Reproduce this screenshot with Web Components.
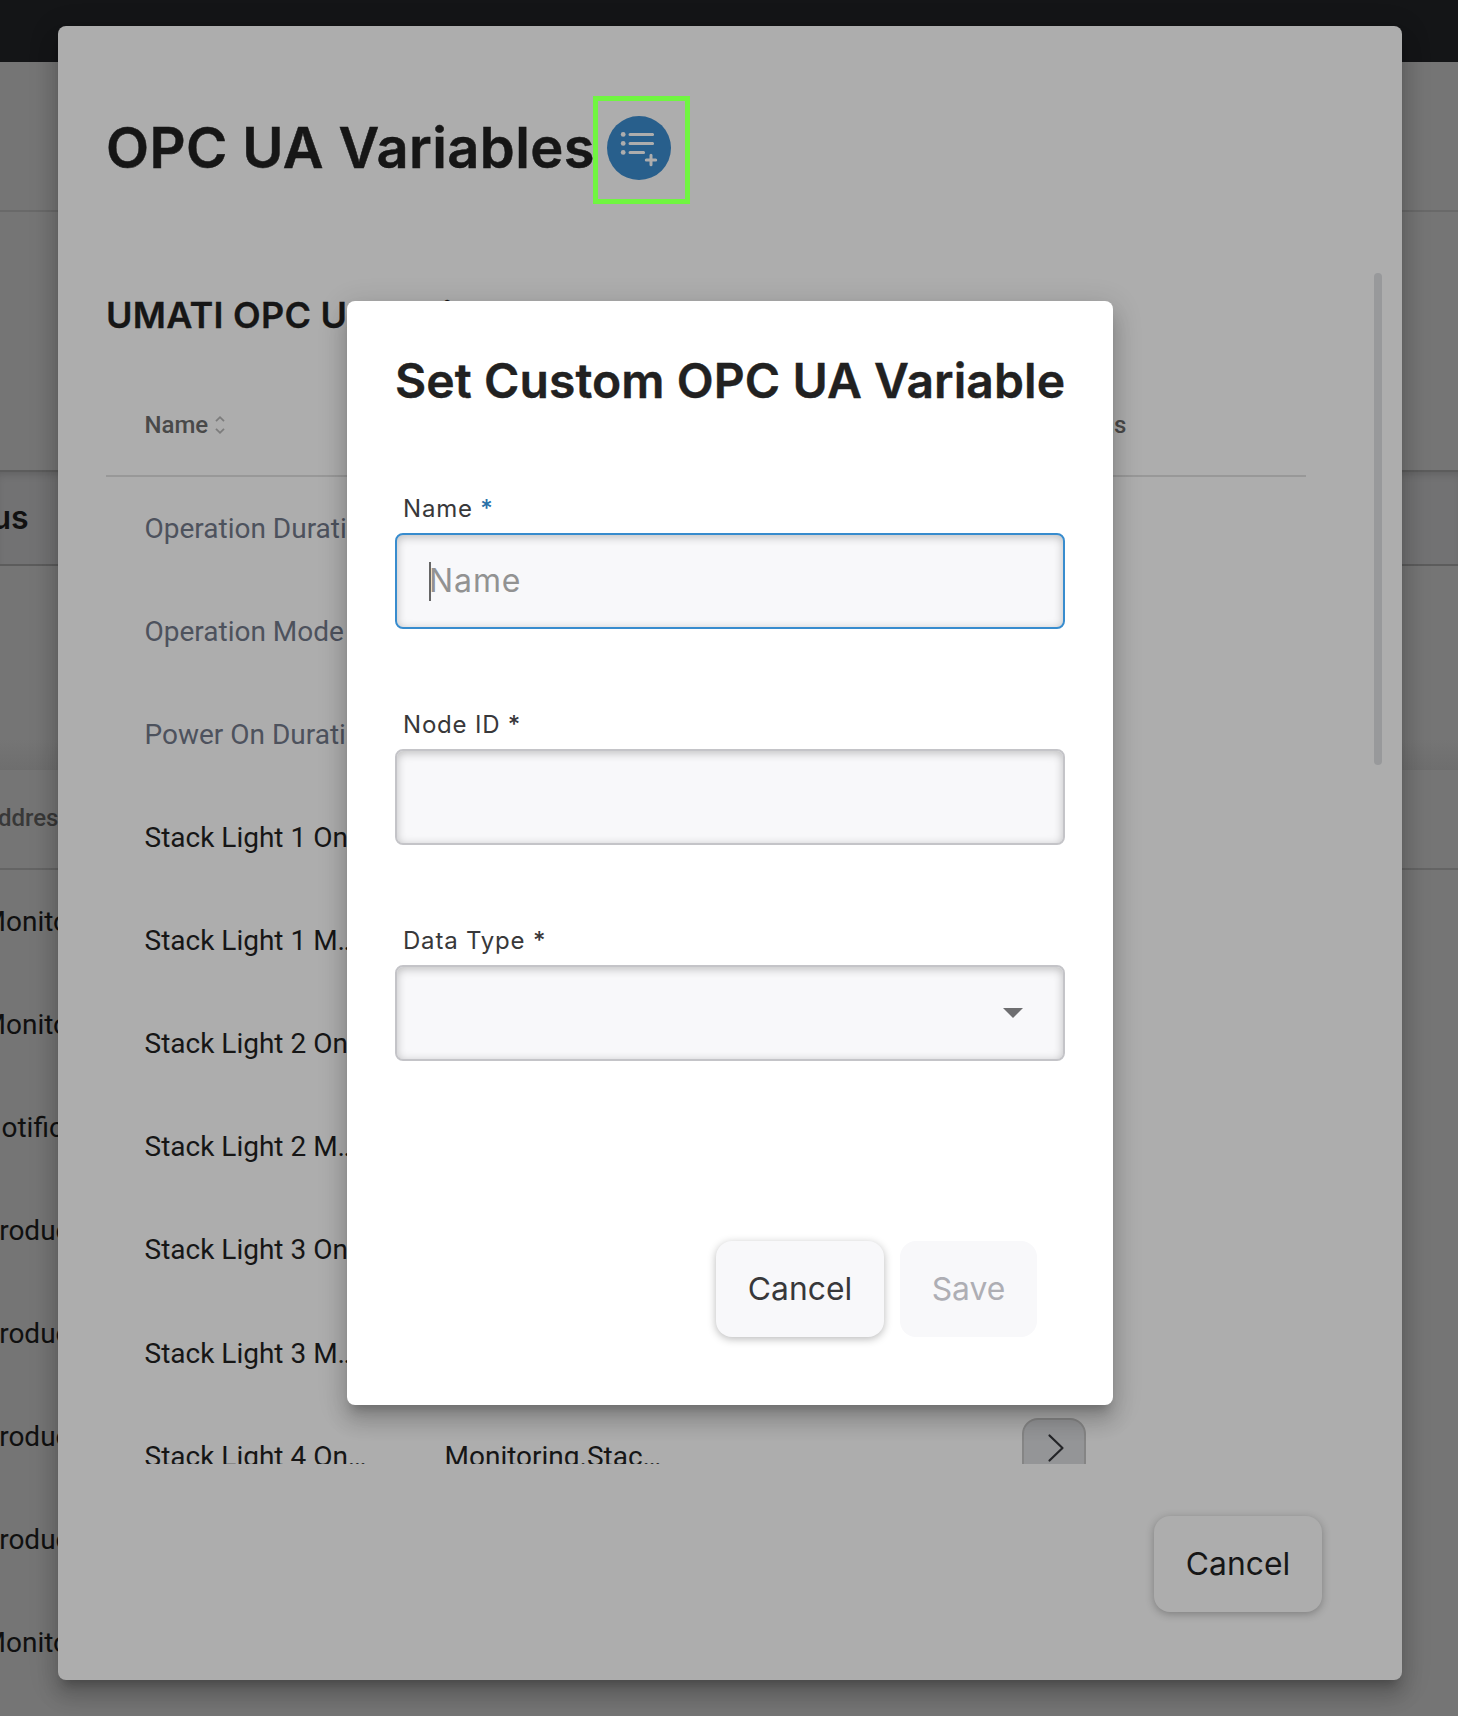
<!DOCTYPE html>
<html lang="en">
<head>
<meta charset="utf-8">
<title>OPC UA Variables</title>
<style>
html,body{margin:0;height:1716px;overflow:hidden;background:#757575;font-family:Inter,"Liberation Sans",sans-serif}
</style>
</head>
<body>
<opc-app></opc-app>
<script>
const define = (name, html) => customElements.define(name, class extends HTMLElement {
  constructor() {
    super();
    const t = document.createElement('template');
    t.innerHTML = html;
    this.attachShadow({mode: 'open'}).append(t.content.cloneNode(true));
  }
});

define('data-cell', `<style>
:host{display:block;box-sizing:border-box;height:var(--row,103px);font:400 28px/103px Roboto,sans-serif;color:#161616;white-space:nowrap;overflow:hidden;text-overflow:ellipsis}
:host([muted]){color:#4d525d}
</style><slot></slot>`);

define('back-page', `<style>
:host{display:flex;flex-direction:column;width:1458px;height:1716px;background:#757575;overflow:hidden}
.bar{height:62px;background:#141517}
.head{height:148px;border-bottom:2px solid #696969}
.sub{height:258px}
.tabs{height:92px;border-top:2px solid #5c5c5c;border-bottom:2px solid #5c5c5c;background:#727273;box-shadow:inset 0 6px 8px -4px rgba(0,0,0,.16);font:600 32px/92px Inter,sans-serif;color:#111}
.tabs span{margin-left:-70.5px}
.gap{height:204px;background:linear-gradient(#757575 85%,#6e6e6e)}
.th{height:98px;border-bottom:2px solid #646464;font:500 24px/96px Roboto,sans-serif;color:#383838}
.th span{margin-left:-18px}
data-cell{margin-left:-18.5px;color:#101010;width:260px}
</style>
<div class="bar"></div><div class="head"></div><div class="sub"></div>
<div class="tabs"><span>Status</span></div><div class="gap"></div>
<div class="th"><span>Address</span></div>
<div class="rows">
<data-cell>Monitoring.</data-cell><data-cell>Monitoring.</data-cell><data-cell>Notification.</data-cell><data-cell>Production.</data-cell><data-cell>Production.</data-cell><data-cell>Production.</data-cell><data-cell>Production.</data-cell><data-cell>Monitoring.</data-cell>
</div>`);

define('ui-button', `<style>
:host{display:grid;place-items:center;box-sizing:border-box;height:96px;width:168px;border-radius:16px;background:var(--bg,#f8f8fa);color:var(--fg,#38383a);font:400 31.8px/40px Inter,sans-serif;box-shadow:0 2px 8px rgba(0,0,0,.28)}
:host([disabled]){width:137px;color:#aeaeb4;box-shadow:none}
</style><span><slot></slot></span>`);

define('add-list-button', `<style>
:host{display:grid;place-items:center;box-sizing:border-box;width:97px;height:108px;border:5px solid #70f540;padding:0 6px 4px 0}
svg{display:block}
</style>
<svg width="64" height="64" viewBox="0 0 64 64"><circle cx="32" cy="32" r="32" fill="#285f8c"/>
<g fill="#adadad"><circle cx="16.2" cy="18.4" r="2.4"/><circle cx="16.2" cy="27.4" r="2.4"/><circle cx="16.2" cy="36.4" r="2.4"/></g>
<path d="M23 18.4H45.6M23 27.4H45.6M23 36.4H36.6M44 39.3V48.7M39.3 44H48.7" stroke="#adadad" stroke-width="3" stroke-linecap="round" fill="none"/></svg>`);

define('sort-icon', `<style>:host{display:block}svg{display:block}</style>
<svg width="10" height="20" viewBox="0 0 10 20"><path d="M1 6.2L5 2.2L9 6.2M1 13.8L5 17.8L9 13.8" fill="none" stroke="#7c7c7c" stroke-width="1.8"/></svg>`);

define('row-button', `<style>
:host{display:grid;place-items:center;box-sizing:border-box;width:64px;height:64px;border:2px solid #858585;border-radius:16px;background:#949597}
svg{display:block}
</style>
<svg width="60" height="60" viewBox="0 0 60 60"><path d="M25.5 15.5L38.5 28L25.5 40.5" fill="none" stroke="#242528" stroke-width="2.2" stroke-linecap="round" stroke-linejoin="round"/></svg>`);

define('variables-table', `<style>
:host{display:block;width:1200px;--row:103.065px}
.grid{display:grid;grid-template-columns:300px 560px 340px}
.th{display:flex;align-items:center;gap:7px;height:95px;padding:0 0 9px 38.5px;font:500 24px/28px Roboto,sans-serif;color:#494949;box-sizing:border-box}
.th:nth-child(3){padding-left:78.5px}
.head{border-bottom:2px solid #989898;height:93px}
data-cell{margin-left:38.5px;width:224px}
.b data-cell{margin-left:38.5px;width:218px}
.act{display:flex;align-items:center;padding:0 0 13px 56px;height:90px}
</style>
<div class="grid head"><div class="th">Name <sort-icon></sort-icon></div><div></div><div class="th">Actions</div></div>
<div class="grid"><data-cell muted>Operation Duration</data-cell></div>
<div class="grid"><data-cell muted>Operation Mode</data-cell></div>
<div class="grid"><data-cell muted>Power On Duration</data-cell></div>
<div class="grid"><data-cell>Stack Light 1 On/Off</data-cell></div>
<div class="grid"><data-cell>Stack Light 1 Mode</data-cell></div>
<div class="grid"><data-cell>Stack Light 2 On/Off</data-cell></div>
<div class="grid"><data-cell>Stack Light 2 Mode</data-cell></div>
<div class="grid"><data-cell>Stack Light 3 On/Off</data-cell></div>
<div class="grid"><data-cell>Stack Light 3 Mode</data-cell></div>
<div class="grid"><data-cell>Stack Light 4 On/Off</data-cell><div class="b"><data-cell>Monitoring.Stacklight</data-cell></div><div class="act"><row-button></row-button></div></div>`);

define('variables-dialog', `<style>
:host{display:flex;flex-direction:column;box-sizing:border-box;width:1344px;height:1654px;padding:70px 20px 0 48px;border-radius:8px;background:#adadad;box-shadow:0 10px 10px -6px rgba(0,0,0,.2),0 16px 20px 2px rgba(0,0,0,.14),0 6px 28px 4px rgba(0,0,0,.12);color:#161616}
header{display:flex;height:177px}
h1{margin:0;width:487px;white-space:nowrap;font:600 56px/104px Inter,sans-serif;letter-spacing:.42px;-webkit-text-stroke:.5px}
.body{display:flex;justify-content:space-between;height:1191px}
.clip{height:1191px;overflow:hidden}
h2{margin:0;height:109px;font:600 36px/85px Inter,sans-serif;letter-spacing:.25px;-webkit-text-stroke:.3px}
.bar{width:8px;height:492px;border-radius:4px;background:#98999b}
footer{display:flex;justify-content:flex-end;padding:52px 60px 0 0}
ui-button{--bg:#adadad;--fg:#161616}
</style>
<header><h1>OPC UA Variables</h1><add-list-button></add-list-button></header>
<div class="body"><div class="clip"><h2>UMATI OPC UA Variables</h2><variables-table></variables-table></div><div class="bar"></div></div>
<footer><ui-button>Cancel</ui-button></footer>`);

define('form-field', `<style>
:host{display:block;height:216px;--line:#c4c4c8;--star:#38383a}
:host([active]){--line:#388cce;--star:#2a70a8}
label{display:block;height:48px;padding-left:8px;font:400 24px/48px Inter,sans-serif;letter-spacing:.8px;color:#38383a}
b{font-weight:500;color:var(--star)}
.box{box-sizing:border-box;display:flex;align-items:center;justify-content:space-between;height:96px;padding:0 40px 0 32px;border:2px solid var(--line);border-radius:8px;background:#f8f8fa;box-shadow:inset 0 2px 10px rgba(0,0,0,.24);font:400 32px/40px Inter,sans-serif;letter-spacing:.9px;color:#929292}
.caret{display:none;width:2px;height:39px;background:#666;margin-right:-2px}
:host([active]) .in{display:flex;align-items:center}
:host([active]) .caret{display:block}
svg{display:none}
:host([select]) svg{display:block}
</style>
<label><slot></slot> <b>*</b></label>
<div class="box"><div class="in"><span class="caret"></span><slot name="hint"></slot></div><svg width="20" height="10"><path d="M0 0H20L10 10Z" fill="#6e6e70"/></svg></div>`);

define('custom-dialog', `<style>
:host{display:flex;flex-direction:column;box-sizing:border-box;width:766px;height:1104px;padding:50px 48px 0;border-radius:8px;background:#fff;box-shadow:0 10px 10px -6px rgba(0,0,0,.2),0 16px 20px 2px rgba(0,0,0,.14),0 6px 28px 4px rgba(0,0,0,.12);color:#212121}
h1{margin:0;height:134px;white-space:nowrap;font:600 48px/60px Inter,sans-serif;letter-spacing:.09px;-webkit-text-stroke:.4px}
.fields{height:756px}
footer{display:flex;justify-content:flex-end;gap:16px;padding-right:28px}
</style>
<h1>Set Custom OPC UA Variable</h1>
<div class="fields"><form-field active>Name<span slot="hint">Name</span></form-field><form-field>Node ID</form-field><form-field select>Data Type</form-field></div>
<footer><ui-button>Cancel</ui-button><ui-button disabled>Save</ui-button></footer>`);

define('opc-app', `<style>
:host{display:block;position:relative;width:1458px;height:1716px;overflow:hidden}
variables-dialog{position:absolute;left:58px;top:26px}
custom-dialog{position:absolute;left:347px;top:301px}
</style><back-page></back-page><variables-dialog></variables-dialog><custom-dialog></custom-dialog>`);
</script>
</body>
</html>
